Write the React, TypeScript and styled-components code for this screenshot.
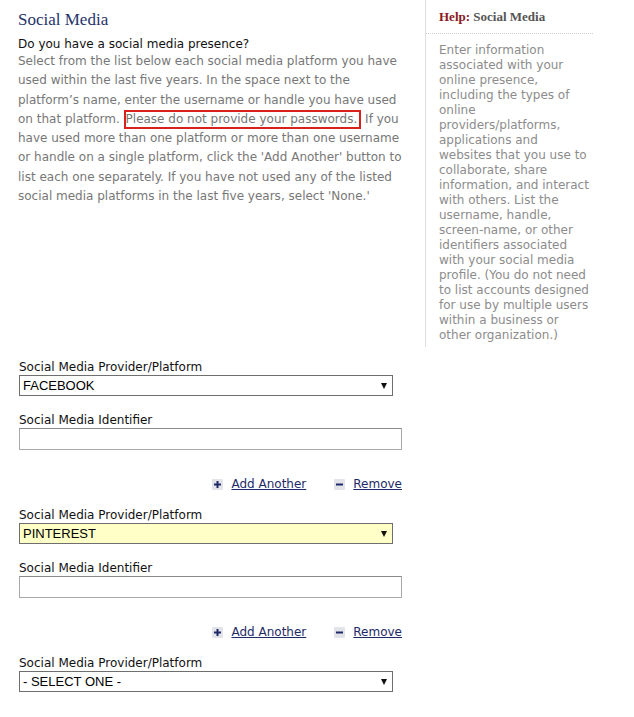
import React from 'react';
import styled, { createGlobalStyle } from 'styled-components';

const GlobalStyle = createGlobalStyle`
    body {
        margin: 0;
        background: #fff;
        font-family: "DejaVu Sans", Verdana, sans-serif;
        font-size: 12px;
    }
`

const Page = styled.div`
    width: 634px;
    padding-left: 18px;
    box-sizing: border-box;
`

const TopRow = styled.div`
    display: flex;
    align-items: flex-start;
`

const Intro = styled.div`
    width: 392px;
    padding-top: 10px;
`

const Title = styled.h1`
    margin: 0 0 6px;
    font-family: "Liberation Serif", "Times New Roman", serif;
    font-weight: normal;
    font-size: 17px;
    line-height: 20px;
    color: #26336a;
`

const Question = styled.div`
    color: #111;
    line-height: 16px;
`

const Body = styled.p`
    margin: 0;
    color: #777;
    line-height: 19.3px;
`

const Warning = styled.span`
    border: 2px solid #d9201a;
    padding: 0 2px 1px 0;
`

const HelpPanel = styled.aside`
    margin-left: 15px;
    width: 168px;
    min-height: 347px;
    border-left: 1px solid #dedede;
    box-sizing: border-box;
`

const HelpHead = styled.div`
    padding: 9px 0 8px 13px;
    border-bottom: 1px dotted #cfcfcf;
    font-family: "Liberation Serif", "Times New Roman", serif;
    font-weight: bold;
    font-size: 13px;
    line-height: 16px;
    color: #555;
    b {
        color: #8a1c1c;
    }
`

const HelpText = styled.div`
    padding: 9px 4px 0 13px;
    color: #8c8c8c;
    line-height: 15px;
`

const Form = styled.div`
    width: 384px;
    margin-top: 13px;
`

const Field = styled.div`
    margin-left: 1px;
    margin-bottom: 17px;
`

const Label = styled.div`
    color: #111;
    line-height: 15px;
`

const SelectWrap = styled.div<{ $filled?: boolean }>`
    position: relative;
    width: 374px;
    height: 21px;
    box-sizing: border-box;
    border: 1px solid #6f6f6f;
    background: ${p => (p.$filled ? '#ffffc8' : '#fff')};
    font-family: "Liberation Sans", Arial, sans-serif;
    font-size: 13px;
    line-height: 19px;
    padding-left: 3px;
    color: #000;
`

const Arrow = styled.span`
    position: absolute;
    right: 5px;
    top: 7px;
    width: 0;
    height: 0;
    border-left: 3px solid transparent;
    border-right: 3px solid transparent;
    border-top: 6px solid #111;
`

const TextBox = styled.div`
    width: 383px;
    height: 22px;
    box-sizing: border-box;
    border: 1px solid #a8a8a8;
    border-top-color: #8a8a8a;
    background: #fff;
`

const Actions = styled.div`
    display: flex;
    justify-content: flex-end;
    gap: 28px;
    margin: 26px 0 16px;
    line-height: 16px;
`

const Action = styled.a`
    display: flex;
    align-items: center;
    gap: 8px;
    color: #1e2a68;
    text-decoration: underline;
    cursor: pointer;
`

const IconBox = styled.span`
    display: inline-flex;
    width: 11px;
    height: 11px;
    background: #e2e4ea;
    border-radius: 1px;
`

function PlusIcon() {
    return (
        <IconBox>
            <svg width="11" height="11" viewBox="0 0 11 11">
                <rect x="2" y="4.5" width="7" height="2" fill="#1e2a68" />
                <rect x="4.5" y="2" width="2" height="7" fill="#1e2a68" />
            </svg>
        </IconBox>
    )
}

function MinusIcon() {
    return (
        <IconBox>
            <svg width="11" height="11" viewBox="0 0 11 11">
                <rect x="2" y="4.5" width="7" height="2" fill="#1e2a68" />
            </svg>
        </IconBox>
    )
}

type Entry = { platform: string, filled?: boolean }

const entries: Entry[] = [
    { platform: 'FACEBOOK' },
    { platform: 'PINTEREST', filled: true },
]

function PlatformSelect({ value, filled }: { value: string, filled?: boolean }) {
    return (
        <Field>
            <Label>Social Media Provider/Platform</Label>
            <SelectWrap $filled={filled}>
                {value}
                <Arrow />
            </SelectWrap>
        </Field>
    )
}

export default function App() {
    return (
        <>
            <GlobalStyle />
            <Page>
                <TopRow>
                    <Intro>
                        <Title>Social Media</Title>
                        <Question>Do you have a social media presence?</Question>
                        <Body>
                            Select from the list below each social media platform you have
                            used within the last five years. In the space next to the
                            platform’s name, enter the username or handle you have used
                            on that platform. <Warning>Please do not provide your passwords.</Warning> If you
                            have used more than one platform or more than one username
                            or handle on a single platform, click the 'Add Another' button to
                            list each one separately. If you have not used any of the listed
                            social media platforms in the last five years, select 'None.'
                        </Body>
                    </Intro>
                    <HelpPanel>
                        <HelpHead><b>Help:</b> Social Media</HelpHead>
                        <HelpText>
                            Enter information associated with your online presence,
                            including the types of online providers/platforms,
                            applications and websites that you use to collaborate, share
                            information, and interact with others. List the username,
                            handle, screen-name, or other identifiers associated with
                            your social media profile. (You do not need to list accounts
                            designed for use by multiple users within a business or
                            other organization.)
                        </HelpText>
                    </HelpPanel>
                </TopRow>
                <Form>
                    {entries.map(e => (
                        <div key={e.platform}>
                            <PlatformSelect value={e.platform} filled={e.filled} />
                            <Field>
                                <Label>Social Media Identifier</Label>
                                <TextBox />
                            </Field>
                            <Actions>
                                <Action><PlusIcon />Add Another</Action>
                                <Action><MinusIcon />Remove</Action>
                            </Actions>
                        </div>
                    ))}
                    <PlatformSelect value="- SELECT ONE -" />
                </Form>
            </Page>
        </>
    )
}
